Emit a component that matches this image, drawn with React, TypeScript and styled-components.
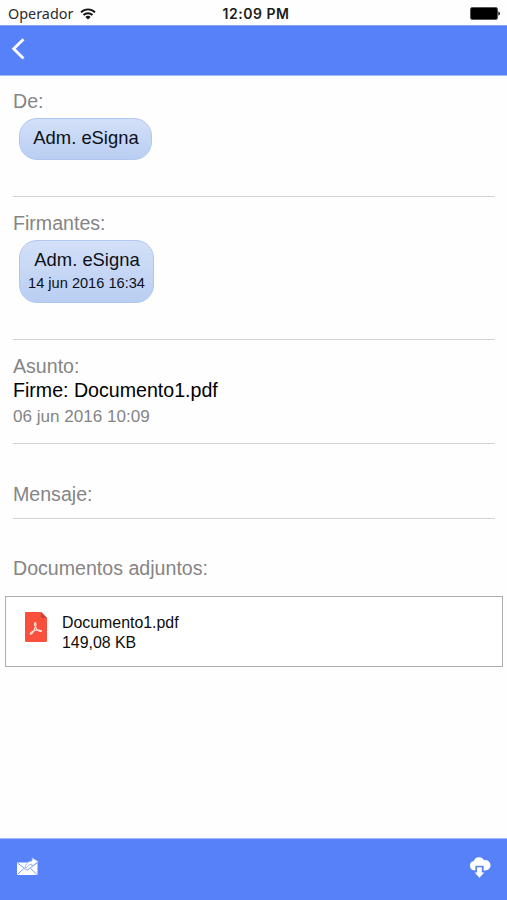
import React from 'react';
import styled, { createGlobalStyle } from 'styled-components';

const Global = createGlobalStyle`
  * { box-sizing: border-box; }
  body { margin: 0; background: #fff; font-family: "Liberation Sans", Arial, sans-serif; }
  svg { display: block; }
`;

const Screen = styled.div`
  display: flex;
  flex-direction: column;
  height: 900px;
  background: #fefefe;
  overflow: hidden;
`;

const StatusBar = styled.header`
  display: grid;
  grid-template-columns: 1fr auto 1fr;
  align-items: center;
  height: 25px;
  flex: none;
  padding: 2px 7px 0 8px;
  font-family: Inter, sans-serif;
`;

const Carrier = styled.div`
  display: flex;
  align-items: center;
  gap: 7px;
  font: 400 14.4px/20px "Noto Sans", sans-serif;
  color: #2b2b2b;
`;

const Clock = styled.time`
  padding-left: 4px;
  font-size: 14px;
  line-height: 20px;
  font-weight: 600;
  letter-spacing: 0.5px;
  color: #1c1c1c;
`;

const Battery = styled.div`
  justify-self: end;
`;

const NavBar = styled.nav`
  height: 51px;
  flex: none;
  padding: 12px 0 0 11px;
  background: #5781f8;
  border-top: 1px solid #86a1f2;
  border-bottom: 1px solid #a3b8f5;
`;

const IconButton = styled.button`
  display: block;
  padding: 0;
  border: 0;
  background: none;
  color: #fff;
`;

const Content = styled.main`
  flex: 1;
  min-height: 0;
`;

const Section = styled.section<{ $height: number; $top: number }>`
  height: ${(p) => p.$height}px;
  margin: 0 12px 0 13px;
  padding-top: ${(p) => p.$top}px;
  border-bottom: 1px solid #d2d2d2;
`;

const Label = styled.h2`
  margin: 0;
  font-size: 19.6px;
  line-height: 24px;
  font-weight: 400;
  color: #858585;
`;

const Chip = styled.div<{ $width: number; $height: number }>`
  width: ${(p) => p.$width}px;
  height: ${(p) => p.$height}px;
  margin: 5px 0 0 6px;
  padding-top: 7px;
  border: 1px solid #b0c6f0;
  border-radius: 18px;
  background: linear-gradient(#d3e0f8, #b9cef2);
  text-align: center;
  white-space: nowrap;
`;

const ChipName = styled.div`
  padding-left: 1px;
  font-size: 18.4px;
  line-height: 24px;
  color: #0c1018;
`;

const ChipDate = styled.div`
  font-size: 14.6px;
  line-height: 22px;
  color: #0c1018;
`;

const Subject = styled.p`
  margin: 0;
  font-size: 19.6px;
  line-height: 25px;
  color: #000;
`;

const SentDate = styled.p`
  margin: 2px 0 0;
  font-size: 17.1px;
  line-height: 24px;
  color: #858585;
`;

const AttachmentsTitle = styled.div`
  padding: 37px 0 0 13px;
`;

const Attachment = styled.article`
  display: flex;
  gap: 15px;
  height: 71px;
  margin: 16px 4px 0 5px;
  padding: 15px 0 0 19px;
  border: 1px solid #adadad;
  background: #fff;
`;

const FileInfo = styled.div`
  padding-top: 1px;
  font-size: 15.9px;
  line-height: 20px;
  color: #0d0d0d;
`;

const BottomBar = styled.footer`
  display: flex;
  justify-content: space-between;
  align-items: flex-start;
  flex: none;
  height: 62px;
  padding: 17px 16px 0 16px;
  background: #5781f8;
  border-top: 1px solid #a3b8f5;
`;

const WifiIcon = () => (
  <svg width="16" height="12" viewBox="0 0 16 12" fill="none" stroke="#151515" strokeWidth="1.9">
    <path d="M1 4.400C5 .4 11 .4 15 4.400M3.500 7C6 4.600 10 4.600 12.500 7" />
    <path d="M8 11.600 5.400 8.900c1.500-1.400 3.700-1.400 5.200 0z" fill="#151515" stroke="none" />
  </svg>
);

const BatteryIcon = () => (
  <svg width="30" height="13" viewBox="0 0 30 13">
    <rect x=".5" y=".5" width="27" height="12" rx="1.800" fill="#000" stroke="#555" />
    <path d="M28.400 4.400c2 .5 2 3.700 0 4.200z" fill="#000" />
  </svg>
);

const BackIcon = () => (
  <svg width="15" height="22" viewBox="0 0 15 22" fill="none" stroke="currentColor" strokeWidth="2.800">
    <path d="M12.500 1.200 2.700 10.800l9.800 9.600" />
  </svg>
);

const PdfIcon = () => (
  <svg width="22" height="30" viewBox="0 0 22 30">
    <path d="M1.200 0H16l6 6v22.800c0 .7-.5 1.200-1.200 1.200H1.200C.5 30 0 29.500 0 28.800V1.200C0 .5.500 0 1.200 0z" fill="#f8503c" />
    <path d="M16 0l6 6h-4.800C16.500 6 16 5.500 16 4.800z" fill="#c93f32" />
    <path
      d="M10.100 10.700c1.300-.3.900 3-.1 5.300-1.100 2.700-2.900 5.900-4.200 6.200-1.300.1-.4-1.800 2.200-2.900 2.700-1.100 6.400-1.500 8-.8 1.300.7-.1 1.500-1.700.7-1.900-.9-3.800-3.300-4.500-5.500-.4-1.400-.5-2.800.3-3z"
      fill="none"
      stroke="#ffe7df"
      strokeWidth="1.100"
    />
  </svg>
);

const ForwardMailIcon = () => (
  <svg width="24" height="21" viewBox="0 -1 24 21">
    <path d="M1 5.500h20.500V18H1z" fill="#fff" />
    <path d="M1.400 6l9.600 7.200L21 6M1.400 17.500l6.500-6M21 17.500l-6.500-6" fill="none" stroke="#829df0" strokeWidth="1" />
    <path d="M9 10.300C10 6 13 4 16 4V.8L22.300 4.500 16 9.300V7.200c-3 0-4.500 1.500-5.200 3.500z" fill="#fff" stroke="#8ca8f7" strokeWidth=".8" />
  </svg>
);

const CloudDownloadIcon = () => (
  <svg width="22" height="22" viewBox="0 0 22 22">
    <path d="M5.500 14.500A4.800 4.800 0 0 1 4.800 5 5.500 5.500 0 0 1 15 4.300a5.200 5.200 0 1 1 .8 10.200z" fill="#fff" />
    <path d="M6.400 15V9.800h8.200V15z" fill="#5781f8" />
    <path d="M8 11.200h4.800v5.300h2.500l-4.900 5.200-4.800-5.200H8z" fill="#fff" />
  </svg>
);

export default function App() {
  return (
    <Screen>
      <Global />
      <StatusBar>
        <Carrier>
          <span>Operador</span>
          <WifiIcon />
        </Carrier>
        <Clock>12:09 PM</Clock>
        <Battery>
          <BatteryIcon />
        </Battery>
      </StatusBar>
      <NavBar>
        <IconButton aria-label="Atrás">
          <BackIcon />
        </IconButton>
      </NavBar>
      <Content>
        <Section $height={121} $top={13}>
          <Label>De:</Label>
          <Chip $width={133} $height={42}>
            <ChipName>Adm. eSigna</ChipName>
          </Chip>
        </Section>
        <Section $height={143} $top={14}>
          <Label>Firmantes:</Label>
          <Chip $width={135} $height={63}>
            <ChipName>Adm. eSigna</ChipName>
            <ChipDate>14 jun 2016 16:34</ChipDate>
          </Chip>
        </Section>
        <Section $height={104} $top={14}>
          <Label>Asunto:</Label>
          <Subject>Firme: Documento1.pdf</Subject>
          <SentDate>06 jun 2016 10:09</SentDate>
        </Section>
        <Section $height={75} $top={38}>
          <Label>Mensaje:</Label>
        </Section>
        <AttachmentsTitle>
          <Label>Documentos adjuntos:</Label>
        </AttachmentsTitle>
        <Attachment>
          <PdfIcon />
          <FileInfo>
            <div>Documento1.pdf</div>
            <div>149,08 KB</div>
          </FileInfo>
        </Attachment>
      </Content>
      <BottomBar>
        <IconButton aria-label="Reenviar">
          <ForwardMailIcon />
        </IconButton>
        <IconButton aria-label="Descargar">
          <CloudDownloadIcon />
        </IconButton>
      </BottomBar>
    </Screen>
  );
}
